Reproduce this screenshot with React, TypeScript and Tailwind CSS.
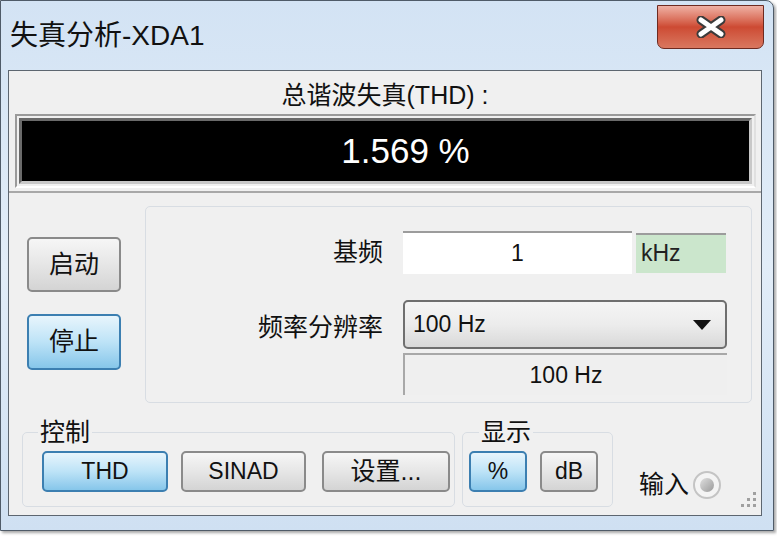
import React from 'react';

const cjk = '[font-family:"Liberation_Sans","Noto_Sans_CJK_SC",sans-serif]';

const grayBtn =
  'flex items-center justify-center rounded-[5px] border-2 border-[#8a8a8a] bg-gradient-to-b from-[#f6f6f6] via-[#e6e6e6] to-[#d4d4d4] text-[#111]';
const blueBtn =
  'flex items-center justify-center rounded-[5px] border-2 border-[#3c7fb1] bg-gradient-to-b from-[#e8f5fc] via-[#bde3f7] to-[#86c6ea] text-[#111]';

function CloseButton() {
  return (
    <div className="mr-[9px] mt-[4px] flex h-[44px] w-[107px] items-center justify-center rounded-b-[7px] border border-[#6e2a20] bg-gradient-to-b from-[#eeb0a4] via-[#cd4a33] to-[#d9775f]">
      <svg width="32" height="22" viewBox="0 0 32 22">
        <path d="M6 4 L26 18 M26 4 L6 18" stroke="#3b3b3b" strokeWidth="9" strokeLinecap="round" />
        <path d="M6 4 L26 18 M26 4 L6 18" stroke="#ffffff" strokeWidth="5" strokeLinecap="round" />
      </svg>
    </div>
  );
}

function Grip() {
  return (
    <svg width="22" height="22" viewBox="0 0 22 22" className="mb-[4px] mr-[3px] self-end">
      {[
        [17, 3],
        [17, 9],
        [11, 9],
        [17, 15],
        [11, 15],
        [5, 15],
      ].map(([x, y]) => (
        <rect key={`${x}-${y}`} x={x} y={y} width="3" height="3" fill="#a0a0a0" />
      ))}
    </svg>
  );
}

export default function App() {
  return (
    <div className={`h-[542px] w-[777px] overflow-hidden bg-white ${cjk}`}>
      <div className="flex h-[531px] w-[774px] flex-col rounded-tr-[8px] border border-[#4f5b68] bg-gradient-to-b from-[#d3e3f4] via-[#e2edf8] to-[#cfe0f2] shadow-[2px_2px_3px_rgba(0,0,0,0.35)]">
        {/* title bar */}
        <div className="flex h-[69px] items-start justify-between">
          <div className="pl-[9px] pt-[20px] text-[28px] leading-[30px] text-[#111]">失真分析-XDA1</div>
          <CloseButton />
        </div>

        {/* client area */}
        <div className="ml-[7px] mr-[11px] flex h-[446px] flex-col border border-[#5d6670] bg-[#f0f0f0]">
          {/* THD readout */}
          <div className="flex h-[122px] flex-col border-b-2 border-[#a8a8a8]">
            <div className="pt-[9px] text-center text-[25px] leading-[30px] text-[#111]">总谐波失真(THD) :</div>
            <div className="ml-[6px] mr-[5px] mt-[4px] border-2 border-[#9a9a9a] border-b-white border-r-[#e0e0e0] p-[2px]">
              <div className="flex h-[66px] items-center justify-center border-[3px] border-[#6a6a6a] border-b-[#c8c8c8] border-r-[#c8c8c8] bg-black pl-[40px]">
                <span className="text-[35px] text-white">1.569 %</span>
              </div>
            </div>
          </div>

          {/* middle */}
          <div className="flex h-[216px]">
            <div className="flex w-[136px] flex-col gap-[22px] pl-[18px] pt-[44px]">
              <div className={`${grayBtn} h-[55px] w-[94px] text-[25px]`}>启动</div>
              <div className={`${blueBtn} h-[56px] w-[94px] text-[25px]`}>停止</div>
            </div>
            <div className="mt-[13px] flex h-[197px] w-[607px] flex-col rounded-[5px] border border-[#d8dde3] pt-[24px]">
              <div className="flex items-center">
                <div className="w-[237px] text-right text-[25px] text-[#111]">基频</div>
                <div className="ml-[20px] flex h-[43px] w-[229px] items-center justify-center border-t-2 border-[#9c9c9c] bg-white text-[23px] text-[#111]">
                  1
                </div>
                <div className="ml-[4px] flex h-[40px] w-[90px] items-center border-t-2 border-[#9c9c9c] bg-[#cbe6cc] pl-[5px] text-[23px] text-[#222]">
                  kHz
                </div>
              </div>
              <div className="mt-[26px] flex items-start">
                <div className="w-[237px] pt-[9px] text-right text-[25px] text-[#111]">频率分辨率</div>
                <div className="ml-[20px] flex w-[324px] flex-col gap-[4px]">
                  <div className="flex h-[49px] items-center justify-between rounded-[5px] border-2 border-[#6f6f6f] bg-gradient-to-b from-[#f5f5f5] via-[#ececec] to-[#d9d9d9] pl-[8px] pr-[14px] text-[23px] text-[#111]">
                    <span>100 Hz</span>
                    <svg width="18" height="10" viewBox="0 0 18 10">
                      <path d="M0 0 H18 L9 10 Z" fill="#111" />
                    </svg>
                  </div>
                  <div className="flex h-[42px] items-center justify-center border-l-2 border-t-2 border-[#a8a8a8] bg-[#efefef] text-[23px] text-[#111]">
                    100 Hz
                  </div>
                </div>
              </div>
            </div>
          </div>

          {/* bottom */}
          <div className="flex flex-1 items-start">
            <fieldset className="ml-[13px] mt-[9px] h-[89px] w-[433px] min-w-0 rounded-[5px] border border-[#d8dde3] pl-[19px] pr-[2px]">
              <legend className="ml-[-4px] px-[2px] text-[25px] leading-[28px] text-[#111]">控制</legend>
              <div className="mt-[5px] flex">
                <div className={`${blueBtn} h-[41px] w-[126px] text-[23px]`}>THD</div>
                <div className={`${grayBtn} ml-[13px] h-[41px] w-[125px] text-[23px]`}>SINAD</div>
                <div className={`${grayBtn} ml-[16px] h-[41px] w-[128px] text-[25px]`}>设置...</div>
              </div>
            </fieldset>
            <fieldset className="ml-[7px] mt-[9px] h-[89px] w-[151px] min-w-0 rounded-[5px] border border-[#d8dde3] pl-[6px]">
              <legend className="ml-[10px] px-[2px] text-[25px] leading-[28px] text-[#111]">显示</legend>
              <div className="mt-[5px] flex gap-[13px]">
                <div className={`${blueBtn} h-[41px] w-[58px] text-[23px]`}>%</div>
                <div className={`${grayBtn} h-[41px] w-[58px] text-[23px]`}>dB</div>
              </div>
            </fieldset>
            <div className="ml-[26px] mt-[57px] flex items-center gap-[4px]">
              <span className="text-[25px] text-[#111]">输入</span>
              <div className="flex h-[28px] w-[28px] items-center justify-center rounded-full border-2 border-[#c4c4c4] bg-[#f4f4f4]">
                <div className="h-[14px] w-[14px] rounded-full bg-gradient-to-br from-[#e0e0e0] to-[#9a9a9a]" />
              </div>
            </div>
            <div className="flex flex-1 justify-end self-stretch">
              <Grip />
            </div>
          </div>
        </div>
      </div>
    </div>
  );
}
